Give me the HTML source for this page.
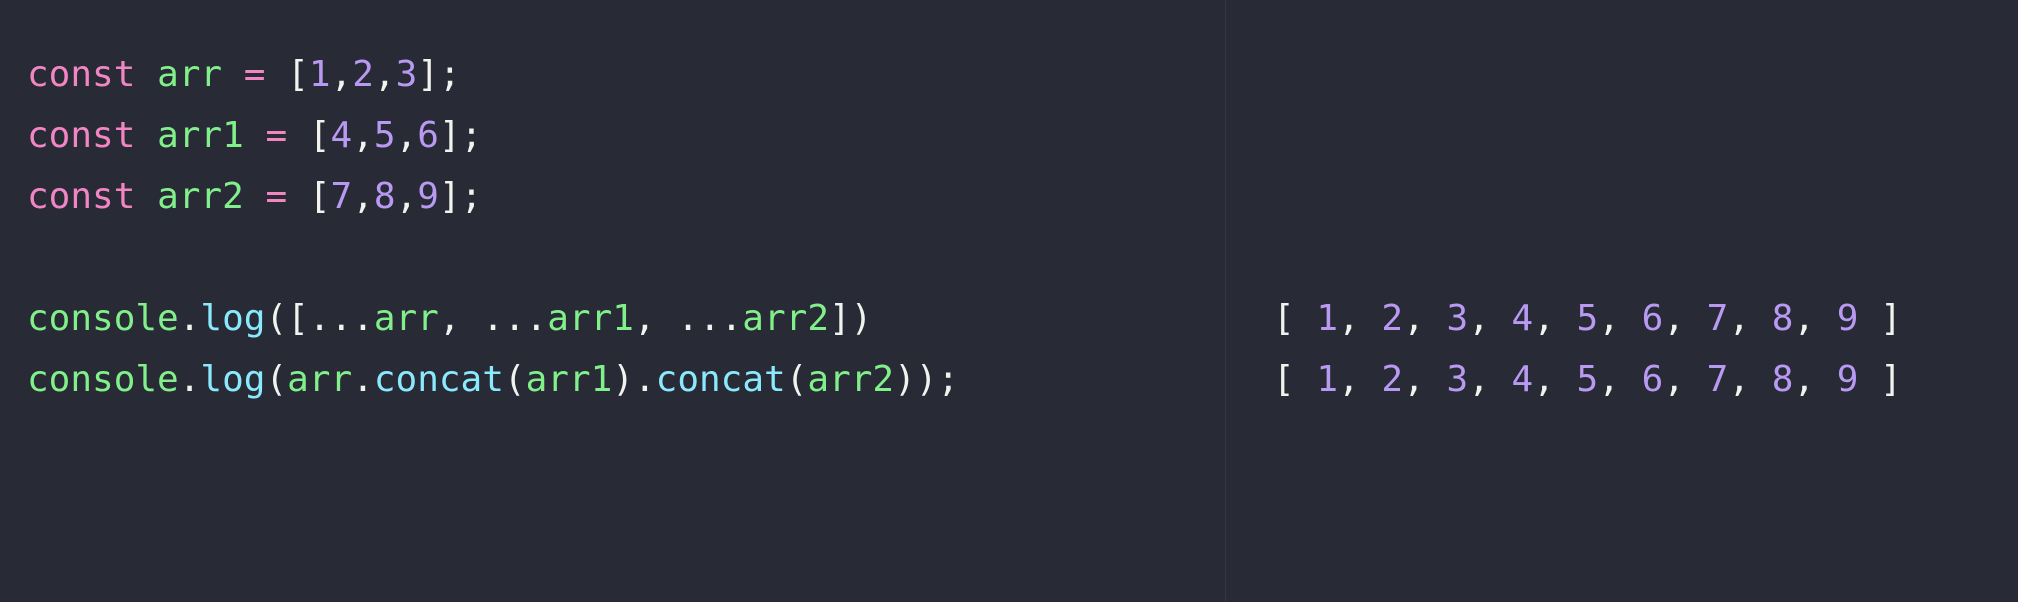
<!DOCTYPE html>
<html><head><style>
body{margin:0;width:2018px;height:602px;background:#282a36;overflow:hidden;position:relative;font-family:"DejaVu Sans Mono","Liberation Mono",monospace;}
.code{position:absolute;left:27px;top:44px;font-size:36px;line-height:61px;color:#f2f2ee;white-space:pre;}
.k{color:#f286c4}.g{color:#82f08a}.n{color:#b99af2}.c{color:#8be9fd}
.div{position:absolute;left:1225px;top:0;width:1px;height:602px;background:#363846}
.res{position:absolute;left:1273px;top:288px;font-size:36px;line-height:61px;color:#f2f2ee;white-space:pre;}
</style></head><body>
<div class="code"><span class="k">const</span> <span class="g">arr</span> <span class="k">=</span> [<span class="n">1</span>,<span class="n">2</span>,<span class="n">3</span>];
<span class="k">const</span> <span class="g">arr1</span> <span class="k">=</span> [<span class="n">4</span>,<span class="n">5</span>,<span class="n">6</span>];
<span class="k">const</span> <span class="g">arr2</span> <span class="k">=</span> [<span class="n">7</span>,<span class="n">8</span>,<span class="n">9</span>];

<span class="g">console</span>.<span class="c">log</span>([...<span class="g">arr</span>, ...<span class="g">arr1</span>, ...<span class="g">arr2</span>])
<span class="g">console</span>.<span class="c">log</span>(<span class="g">arr</span>.<span class="c">concat</span>(<span class="g">arr1</span>).<span class="c">concat</span>(<span class="g">arr2</span>));</div>
<div class="div"></div>
<div class="res">[ <span class="n">1</span>, <span class="n">2</span>, <span class="n">3</span>, <span class="n">4</span>, <span class="n">5</span>, <span class="n">6</span>, <span class="n">7</span>, <span class="n">8</span>, <span class="n">9</span> ]
[ <span class="n">1</span>, <span class="n">2</span>, <span class="n">3</span>, <span class="n">4</span>, <span class="n">5</span>, <span class="n">6</span>, <span class="n">7</span>, <span class="n">8</span>, <span class="n">9</span> ]</div>
</body></html>
